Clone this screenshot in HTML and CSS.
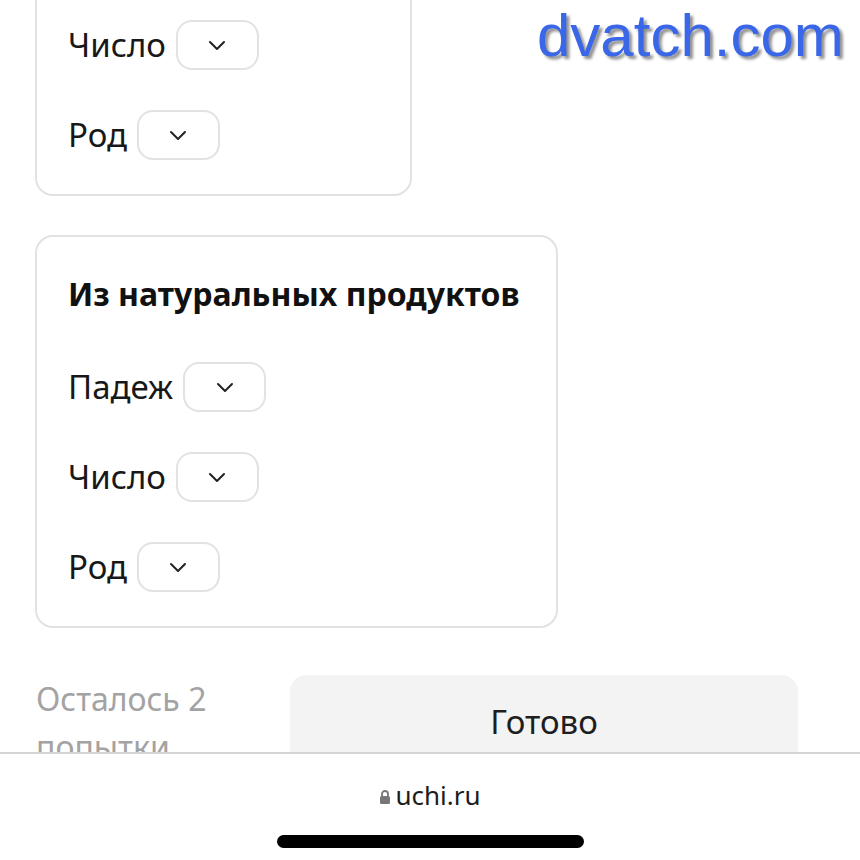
FILE: index.html
```html
<!DOCTYPE html>
<html lang="ru">
<head>
<meta charset="utf-8">
<link rel="stylesheet" href="styles.css">
</head>
<body>
<div class="page">
  <div class="card card-first">
    <div class="rows">
      <div class="row"><span class="label">Число</span><button class="select"><svg viewBox="0 0 18 11" width="18" height="11"><path d="M2 2 L9 9 L16 2" fill="none" stroke="#222" stroke-width="2" stroke-linecap="round" stroke-linejoin="round"/></svg></button></div>
      <div class="row"><span class="label">Род</span><button class="select"><svg viewBox="0 0 18 11" width="18" height="11"><path d="M2 2 L9 9 L16 2" fill="none" stroke="#222" stroke-width="2" stroke-linecap="round" stroke-linejoin="round"/></svg></button></div>
    </div>
  </div>

  <div class="card">
    <h2 class="title">Из натуральных продуктов</h2>
    <div class="rows">
      <div class="row"><span class="label">Падеж</span><button class="select"><svg viewBox="0 0 18 11" width="18" height="11"><path d="M2 2 L9 9 L16 2" fill="none" stroke="#222" stroke-width="2" stroke-linecap="round" stroke-linejoin="round"/></svg></button></div>
      <div class="row"><span class="label">Число</span><button class="select"><svg viewBox="0 0 18 11" width="18" height="11"><path d="M2 2 L9 9 L16 2" fill="none" stroke="#222" stroke-width="2" stroke-linecap="round" stroke-linejoin="round"/></svg></button></div>
      <div class="row"><span class="label">Род</span><button class="select"><svg viewBox="0 0 18 11" width="18" height="11"><path d="M2 2 L9 9 L16 2" fill="none" stroke="#222" stroke-width="2" stroke-linecap="round" stroke-linejoin="round"/></svg></button></div>
    </div>
  </div>

  <div class="footer">
    <div class="attempts">Осталось 2 попытки</div>
    <button class="done">Готово</button>
  </div>
</div>

<div class="browser-bar">
  <div class="url">
    <svg class="lock" viewBox="0 0 12 16" width="12" height="16"><path d="M3 7 V5 a3 3 0 0 1 6 0 V7" fill="none" stroke="#777" stroke-width="1.8"/><rect x="1" y="7" width="10" height="8" rx="1.5" fill="#777"/></svg>
    <span>uchi.ru</span>
  </div>
  <div class="home-indicator"></div>
</div>

<div class="watermark">dvatch.com</div>
</body>
</html>
```

FILE: styles.css
```css
html, body {
  margin: 0;
  padding: 0;
  background: #ffffff;
}

body {
  font-family: "Noto Sans", "Open Sans", sans-serif;
  color: #161616;
  overflow: hidden;
  height: 860px;
}

.page {
  padding-left: 35px;
  display: flex;
  flex-direction: column;
  align-items: flex-start;
}

.card {
  border: 2px solid #e2e2e2;
  border-radius: 18px;
  padding: 38px 37px 34px 31px;
  box-sizing: border-box;
}

.card-first {
  width: 377px;
  margin-top: -20px;
  margin-bottom: 39px;
}

.title {
  margin: 0 0 49px;
  font-size: 32px;
  line-height: 38px;
  font-weight: 700;
  color: #111;
  white-space: nowrap;
}

.rows {
  display: flex;
  flex-direction: column;
  gap: 40px;
}

.row {
  display: flex;
  align-items: center;
  gap: 10px;
  height: 50px;
}

.label {
  font-size: 33px;
  line-height: 40px;
  color: #181818;
}

.select {
  width: 83px;
  height: 50px;
  border: 2px solid #e2e2e2;
  border-radius: 16px;
  background: #fff;
  display: flex;
  align-items: center;
  justify-content: center;
  padding: 0;
}

.footer {
  margin-top: 47px;
  display: flex;
  align-items: flex-start;
  gap: 40px;
  padding-left: 1px;
}

.attempts {
  width: 214px;
  font-size: 32px;
  line-height: 48px;
  color: #a3a3a3;
  margin-top: 0;
}

.done {
  width: 508px;
  height: 100px;
  border: none;
  border-radius: 16px;
  background: #f3f3f3;
  font-family: "Noto Sans", "Open Sans", sans-serif;
  font-size: 33px;
  color: #1e1e1e;
  display: flex;
  justify-content: center;
  padding-top: 24px;
  box-sizing: border-box;
}

.browser-bar {
  position: fixed;
  left: 0;
  right: 0;
  top: 752px;
  bottom: 0;
  background: #fff;
  border-top: 2px solid #d4d4d4;
  display: flex;
  flex-direction: column;
  align-items: center;
}

.url {
  margin-top: 23px;
  display: flex;
  align-items: center;
  gap: 4px;
  font-size: 26px;
  color: #1c1c1c;
}

.lock {
  margin-top: 3px;
}

.home-indicator {
  margin-top: 22px;
  width: 307px;
  height: 13px;
  border-radius: 7px;
  background: #000;
}

.watermark {
  position: absolute;
  left: 537px;
  top: 1px;
  font-family: "Liberation Sans", Arial, sans-serif;
  font-size: 60px;
  color: #3a66e8;
  text-shadow: 3px 3px 3px #8f8f8f;
}
```
